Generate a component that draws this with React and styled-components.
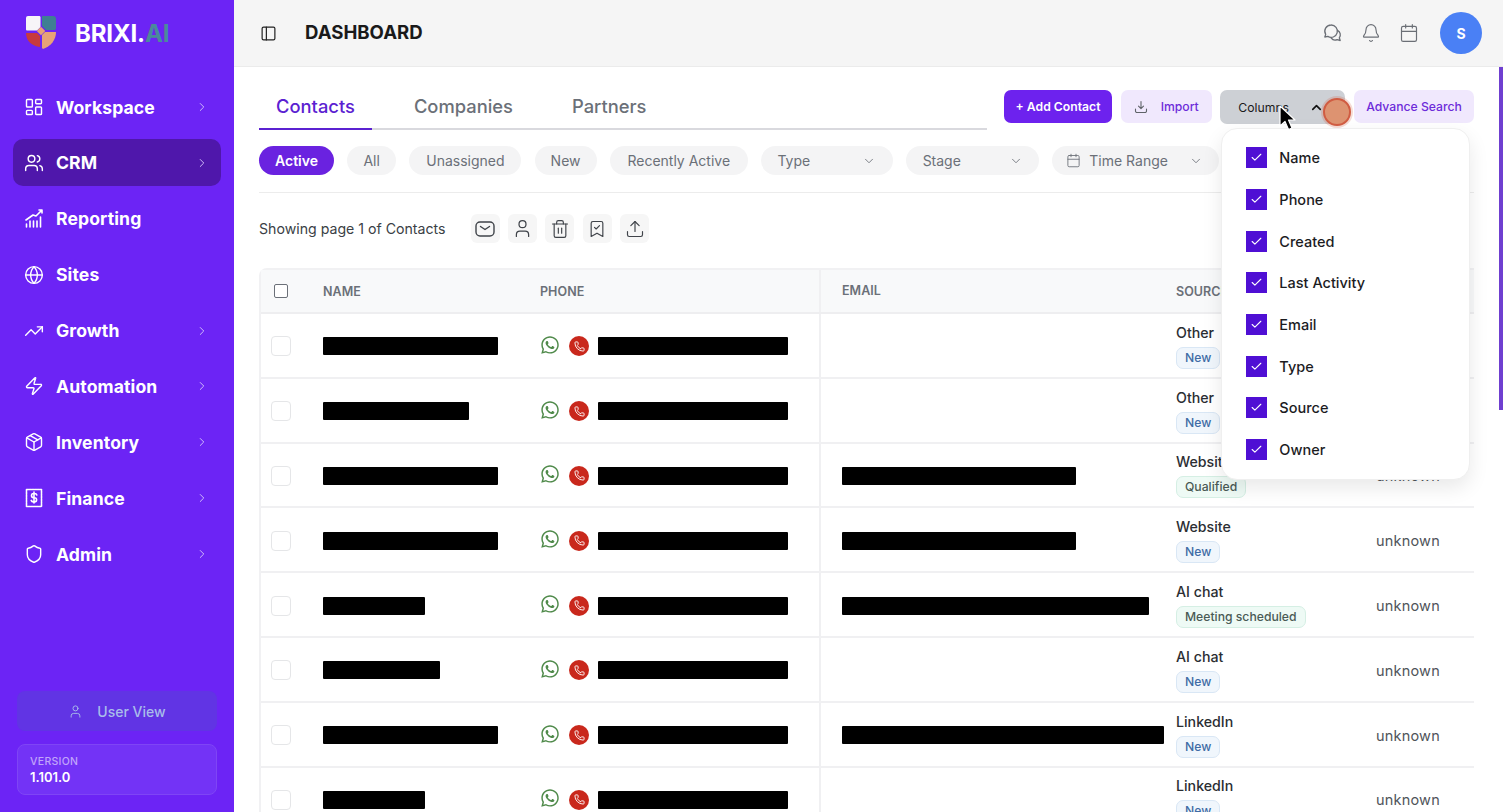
import React from "react";
import styled, { createGlobalStyle } from "styled-components";
import {
  LayoutDashboard, Users, Globe, TrendingUp, Zap, Package, Shield, ChevronRight, ChevronDown, ChevronUp,
  User, Bell, Calendar, PanelLeft, Trash2, BookmarkCheck, Upload, Phone, Check,
} from "lucide-react";
import { FaWhatsapp } from "react-icons/fa";

const Global = createGlobalStyle`
  html, body { margin: 0; padding: 0; height: 100%; overflow: hidden; background: #fff; }
  body { font-family: Inter, "Liberation Sans", sans-serif; color: #1f2430; }
  * { box-sizing: border-box; }
`;

const Shell = styled.div`display: flex; width: 1503px; height: 812px; overflow: hidden; position: relative;`;

const Sidebar = styled.aside`
  width: 234px; flex: none; height: 100%; background: #6c24f5; display: flex; flex-direction: column;
  padding: 0 13px 17px;
`;
const Brand = styled.div`display: flex; align-items: center; gap: 17px; height: 83.6px; flex: none; padding: 0 0 17px 11px;`;
const LogoWrap = styled.span`display: flex; margin-bottom: 2px;`;
const BrandName = styled.span`font-size: 24px; font-weight: 700; color: #fff; letter-spacing: -0.15px;`;
const BrandAccent = styled.span`color: #4a8a9c;`;
const Nav = styled.nav`display: flex; flex-direction: column; gap: 8.88px;`;
const NavItem = styled.div`
  height: 47px; border-radius: 10px; display: flex; align-items: center; padding: 0 12px 0 11px; gap: 12px;
  background: ${(p) => (p.$active ? "#4f17ab" : "transparent")}; color: #fff;
`;
const NavLabel = styled.span`flex: 1; font-size: 17.6px; font-weight: 700; letter-spacing: 0.1px;`;
const NavChevron = styled(ChevronRight)`color: #d5c3fb;`;
const SideBottom = styled.div`margin-top: auto; padding: 0 4px; display: flex; flex-direction: column; gap: 13px;`;
const UserViewBtn = styled.div`
  height: 40px; border-radius: 8px; background: #6134e4; color: #a9bdea; display: flex; align-items: center; justify-content: center;
  gap: 14px; font-size: 14px; font-weight: 500;
`;
const VersionBox = styled.div`
  height: 51px; border-radius: 8px; background: #7333f6; border: 1px solid #7f45f5; padding: 10px 12px; display: flex; flex-direction: column;
`;
const VersionLabel = styled.span`font-size: 10.5px; line-height: 14px; font-weight: 500; color: #c1a4fa; letter-spacing: 0.3px;`;
const VersionValue = styled.span`font-size: 13px; line-height: 16px; font-weight: 600; color: #fff;`;

const Right = styled.div`flex: 1; min-width: 0; display: flex; flex-direction: column; height: 100%;`;
const Header = styled.header`
  height: 67px; flex: none; background: #f5f5f5; border-bottom: 1px solid #ebebeb; display: flex; align-items: center;
  padding: 0 21px 0 26px;
`;
const HeaderTitle = styled.h1`margin: 0 0 2px 28px; font-size: 18.6px; font-weight: 700; color: #1a1a1a; flex: 1;`;
const HeaderIcons = styled.div`display: flex; align-items: center; gap: 18px; color: #6b6f76;`;
const Avatar = styled.div`
  width: 42px; height: 42px; border-radius: 50%; background: #4a80f5; color: #fff; font-size: 14px; font-weight: 700;
  display: flex; align-items: center; justify-content: center; margin-left: 3px;
`;

const Main = styled.main`flex: 1; min-height: 0; overflow: hidden; padding: 23px 29px 0 25px;`;
const TopRow = styled.div`display: flex; justify-content: space-between; align-items: flex-start; height: 40px;`;
const Tabs = styled.div`width: 728px; height: 40px; display: flex; gap: 25px; border-bottom: 2px solid #d9d9de;`;
const Tab = styled.div`
  height: 40px; padding: 0 17px; line-height: 33px; font-size: 18.35px; font-weight: 500;
  color: ${(p) => (p.$active ? "#5b21d1" : "#6b7078")};
  border-bottom: 2px solid ${(p) => (p.$active ? "#5b21d1" : "transparent")};
`;
const Actions = styled.div`display: flex; gap: 8.67px;`;
const ActionButton = styled.div`
  width: ${(p) => p.$w}px; height: 33px; border-radius: 7px; display: flex; align-items: center; justify-content: center; font-size: 12.2px;
  background: ${(p) => (p.$primary ? "#6d22ee" : "#f0e8fd")}; color: ${(p) => (p.$primary ? "#fff" : "#6d2bd9")};
  font-weight: ${(p) => (p.$primary ? 600 : 500)};
  gap: ${(p) => p.$gap || 0}px;
`;
const ColumnsWrap = styled.div`position: relative;`;
const ColumnsButton = styled.div`
  width: 125px; height: 34px; border-radius: 7px; background: #cdd0d5; color: #1a1a1a; display: flex; align-items: center; justify-content: space-between;
  padding: 0 21px 0 18px; font-size: 12.2px; font-weight: 400;
`;
const Dropdown = styled.div`
  position: absolute; top: 38px; left: 1px; width: 249px; height: 352px; background: #fff; border: 1px solid #efefef; border-radius: 16px;
  box-shadow: 0 8px 20px rgba(0,0,0,.09); padding: 8px 0 0 24px; z-index: 5;
`;
const DropItem = styled.div`height: 41.7px; display: flex; align-items: center; gap: 12px; font-size: 14.5px; font-weight: 500; color: #1c1c1f;`;
const DropCheck = styled.span`width: 21px; height: 21px; background: #4f0fd4; color: #fff; display: flex; align-items: center; justify-content: center; flex: none;`;

const Filters = styled.div`
  margin-top: 16px; padding-bottom: 17px; border-bottom: 1px solid #ececec; display: flex; gap: 13.2px; height: 47px;
`;
const Chip = styled.div`
  flex: none; width: ${(p) => p.$w}px; height: 29px; border-radius: 15px; display: flex; align-items: center; justify-content: center; font-size: 14px;
  font-weight: ${(p) => (p.$active ? 600 : 400)};
  background: ${(p) => (p.$active ? "#6a22e0" : "#f4f4f5")}; color: ${(p) => (p.$active ? "#fff" : "#6b7078")};
`;
const SelectChip = styled(Chip)`
  justify-content: space-between; gap: 8px; padding: 0 16.5px 0 ${(p) => p.$pl || 16.5}px;
`;
const SelectLabel = styled.span`flex: 1;`;

const ShowRow = styled.div`margin-top: 21px; height: 29px; display: flex; align-items: center; gap: 8.3px;`;
const ShowText = styled.span`font-size: 14.15px; color: #3b3f46; margin-right: 17px;`;
const IconBtn = styled.div`width: 29px; height: 29px; border-radius: 6px; background: #f6f6f6; color: #3f4349; display: flex; align-items: center; justify-content: center;`;

const Table = styled.div`margin-top: 25px; border: 2px solid #f1f1f3; border-right: none; border-bottom: none; border-radius: 8px 0 0 0; width: 1215px;`;
const cols = "62px 217px 279px 357px 200px 98px";
const HeadRow = styled.div`
  display: grid; grid-template-columns: ${cols}; height: 44px; align-items: center; background: #f8f9fa; border-bottom: 2px solid #eeeef0;
`;
const HeadCell = styled.div`
  font-size: 12.5px; font-weight: 600; color: #6b7078; letter-spacing: 0.05px; height: 100%; display: flex; align-items: center;
  padding-left: ${(p) => p.$pad || 0}px; padding-bottom: ${(p) => (p.$divider ? 2 : 0)}px;
  border-left: ${(p) => (p.$divider ? "2px solid #f0f0f2" : "none")};
`;
const Row = styled.div`display: grid; grid-template-columns: ${cols}; height: 64.8px; align-items: center; border-bottom: 2px solid #f0f0f2;`;
const Cell = styled.div`height: 100%; display: flex; align-items: center; padding-top: 2px; padding-left: ${(p) => p.$pad || 0}px; border-left: ${(p) => (p.$divider ? "2px solid #f0f0f2" : "none")};`;
const HeadCheck = styled.span`width: 14px; height: 14px; border: 1.3px solid #6b7078; border-radius: 2px; margin-left: 13px; display: block; background: #fff;`;
const RowCheck = styled.span`width: 20px; height: 20px; border: 1.5px solid #e5e6e8; border-radius: 4px; margin-left: 10px; display: block; background: #fff;`;
const Redact = styled.span`display: block; background: #000; height: 18px; width: ${(p) => p.$w}px; border-radius: 1px;`;
const PhoneWrap = styled.div`display: flex; align-items: center;`;
const WaIcon = styled(FaWhatsapp)`color: #4f8a4a; width: 20px; height: 20px; margin: 0 9px 3px 0; flex: none;`;
const CallDot = styled.span`width: 20px; height: 20px; border-radius: 50%; background: #c9281c; color: #fff; display: flex; align-items: center; justify-content: center; margin-right: 9px; flex: none;`;
const SourceStack = styled.div`display: flex; flex-direction: column; align-items: flex-start; gap: 6px;`;
const SourceName = styled.span`font-size: 14.2px; line-height: 17px; font-weight: 500; color: #2b2e33;`;
const Badge = styled.span`
  font-size: 12.2px; line-height: 20px; padding: 0 8px; border-radius: 7px; font-weight: 500;
  background: ${(p) => (p.$kind === "green" ? "#eefaf5" : "#f0f6fc")};
  border: 1px solid ${(p) => (p.$kind === "green" ? "#d5efe4" : "#d9e7f5")};
  color: ${(p) => (p.$kind === "green" ? "#4a5a55" : "#3f6ca5")};
`;
const OwnerText = styled.span`font-size: 14.5px; color: #50545a; letter-spacing: 0.2px;`;

const Scrollbar = styled.div`position: absolute; right: 0; top: 67px; width: 4px; height: 343px; background: #6f3fd0; z-index: 4;`;
const ClickDot = styled.div`
  position: absolute; left: 1323px; top: 98px; width: 28px; height: 28px; border-radius: 50%; background: #dd9371;
  border: 2px solid #d05c42; box-shadow: 0 0 0 2px rgba(208,92,66,.22); z-index: 7;
`;
const CursorMark = styled.svg`position: absolute; left: 1278px; top: 105px; z-index: 8;`;

const ReportIcon = () => (
  <svg width="20" height="20" viewBox="0 0 20 20" fill="none" stroke="currentColor" strokeWidth="1.6" strokeLinecap="round" strokeLinejoin="round">
    <path d="M2 11 9 6l3 1 6-6M15 1h3v3" />
    <path d="M2.500 18v-3M6 18v-6M9.500 18v-6M13 18v-6M16.500 18V8" />
  </svg>
);
const FinanceIcon = () => (
  <svg width="20" height="20" viewBox="0 0 20 20" fill="none" stroke="currentColor" strokeWidth="1.6" strokeLinecap="round" strokeLinejoin="round">
    <path d="M2.500 1.500h15v17h-15z" strokeDasharray="2 .7" />
    <path d="M12.800 7a2.200 2.200 0 0 0-2.200-1.500H9.600a2 2 0 0 0 0 4.200h.9a2 2 0 0 1 0 4.200H9.400A2.300 2.300 0 0 1 7.200 12.400M10 4v11" />
  </svg>
);
const ChatIcon = () => (
  <svg width="20" height="20" viewBox="0 0 20 20" fill="none" stroke="currentColor" strokeWidth="1.3" strokeLinecap="round" strokeLinejoin="round">
    <path d="M8 2a6.200 6.200 0 0 0-5.300 9.400L1.800 14l3-.6A6.200 6.200 0 1 0 8 2Z" />
    <path d="M14.500 7.300a5 5 0 0 1 1.800 7.500l.9 2.700-3-.8a5 5 0 0 1-6-1.700" />
  </svg>
);
const ImportIcon = () => (
  <svg width="14" height="14" viewBox="0 0 14 14" fill="none" stroke="#5f6368" strokeWidth="1.100" strokeLinecap="round" strokeLinejoin="round">
    <path d="M7 1.500v7M4.500 6.200 7 8.700l2.500-2.500M1.500 9v2a1.500 1.500 0 0 0 1.500 1.500h8a1.500 1.500 0 0 0 1.500-1.500V9" />
  </svg>
);
const MailIcon = () => (
  <svg width="20" height="20" viewBox="0 0 20 20" fill="none" stroke="currentColor" strokeWidth="1.400" strokeLinecap="round" strokeLinejoin="round">
    <rect x="1" y="3" width="18" height="14" rx="4" />
    <path d="M5.500 7.500 10 10.500l4.500-3" />
  </svg>
);
const LogoMark = () => (
  <svg width="34" height="36" viewBox="0 0 34 36">
    <path d="M4 2h11c1 0 1.500 .5 1.500 1.500V13L13 16.500H3a1 1 0 0 1-1-1V4a2 2 0 0 1 2-2Z" fill="#f7f5f8" />
    <path d="M18 2h11a3 3 0 0 1 3 3v9c0 1-.5 2-1.500 2H22l-4-4V2Z" fill="#3f7f93" />
    <path d="M2 19h11l3 3v11c-8-1-14-6-14-14Z" fill="#c73a3e" />
    <path d="M21 18h11c0 8-5 14-13 17l-1-1V21l3-3Z" fill="#e8a277" />
    <rect x="14" y="14" width="6" height="6" fill="#e8a277" transform="rotate(45 17 17)" />
  </svg>
);

const navItems = [
  { label: "Workspace", icon: <LayoutDashboard size={20} strokeWidth={1.7} />, chev: true },
  { label: "CRM", icon: <Users size={20} strokeWidth={1.7} />, chev: true, active: true },
  { label: "Reporting", icon: <ReportIcon /> },
  { label: "Sites", icon: <Globe size={20} strokeWidth={1.7} /> },
  { label: "Growth", icon: <TrendingUp size={20} strokeWidth={1.7} />, chev: true },
  { label: "Automation", icon: <Zap size={20} strokeWidth={1.7} />, chev: true },
  { label: "Inventory", icon: <Package size={20} strokeWidth={1.7} />, chev: true },
  { label: "Finance", icon: <FinanceIcon />, chev: true },
  { label: "Admin", icon: <Shield size={20} strokeWidth={1.7} />, chev: true },
];
const chips = [
  { label: "All", w: 49 },
  { label: "Unassigned", w: 112 },
  { label: "New", w: 62 },
  { label: "Recently Active", w: 138 },
];
const columnsList = ["Name", "Phone", "Created", "Last Activity", "Email", "Type", "Source", "Owner"];
const rows = [
  { name: 175, email: 0, source: "Other", badge: "New" },
  { name: 146, email: 0, source: "Other", badge: "New" },
  { name: 175, email: 234, source: "Website", badge: "Qualified", green: true },
  { name: 175, email: 234, source: "Website", badge: "New" },
  { name: 102, email: 307, source: "AI chat", badge: "Meeting scheduled", green: true },
  { name: 117, email: 0, source: "AI chat", badge: "New" },
  { name: 175, email: 322, source: "LinkedIn", badge: "New" },
  { name: 102, email: 0, source: "LinkedIn", badge: "New" },
];

export default function App() {
  return (
    <Shell>
      <Global />
      <Sidebar>
        <Brand>
          <LogoWrap><LogoMark /></LogoWrap>
          <BrandName>BRIXI.<BrandAccent>AI</BrandAccent></BrandName>
        </Brand>
        <Nav>
          {navItems.map((n) => (
            <NavItem key={n.label} $active={n.active}>
              {n.icon}
              <NavLabel>{n.label}</NavLabel>
              {n.chev && <NavChevron size={14} strokeWidth={1.6} />}
            </NavItem>
          ))}
        </Nav>
        <SideBottom>
          <UserViewBtn><User size={15} strokeWidth={1.5} />User View</UserViewBtn>
          <VersionBox>
            <VersionLabel>VERSION</VersionLabel>
            <VersionValue>1.101.0</VersionValue>
          </VersionBox>
        </SideBottom>
      </Sidebar>
      <Right>
        <Header>
          <PanelLeft size={17} strokeWidth={1.7} color="#222" />
          <HeaderTitle>DASHBOARD</HeaderTitle>
          <HeaderIcons>
            <ChatIcon />
            <Bell size={20} strokeWidth={1.4} />
            <Calendar size={20} strokeWidth={1.4} />
            <Avatar>S</Avatar>
          </HeaderIcons>
        </Header>
        <Main>
          <TopRow>
            <Tabs>
              <Tab $active>Contacts</Tab>
              <Tab>Companies</Tab>
              <Tab>Partners</Tab>
            </Tabs>
            <Actions>
              <ActionButton $primary $w={108}>+ Add Contact</ActionButton>
              <ActionButton $w={91} $gap={13}><ImportIcon />Import</ActionButton>
              <ColumnsWrap>
                <ColumnsButton>Columns<ChevronUp size={15} strokeWidth={2.6} color="#111" /></ColumnsButton>
                <Dropdown>
                  {columnsList.map((c) => (
                    <DropItem key={c}>
                      <DropCheck><Check size={13} strokeWidth={2} /></DropCheck>
                      {c}
                    </DropItem>
                  ))}
                </Dropdown>
              </ColumnsWrap>
              <ActionButton $w={120}>Advance Search</ActionButton>
            </Actions>
          </TopRow>
          <Filters>
            <Chip $active $w={75}>Active</Chip>
            {chips.map((c) => <Chip key={c.label} $w={c.w}>{c.label}</Chip>)}
            <SelectChip $w={132}><SelectLabel>Type</SelectLabel><ChevronDown size={14} strokeWidth={1.5} /></SelectChip>
            <SelectChip $w={133}><SelectLabel>Stage</SelectLabel><ChevronDown size={14} strokeWidth={1.5} /></SelectChip>
            <SelectChip $w={167} $pl={14}><Calendar size={15} strokeWidth={1.4} /><SelectLabel>Time Range</SelectLabel><ChevronDown size={14} strokeWidth={1.5} /></SelectChip>
          </Filters>
          <ShowRow>
            <ShowText>Showing page 1 of Contacts</ShowText>
            <IconBtn><MailIcon /></IconBtn>
            <IconBtn><User size={21} strokeWidth={1.4} /></IconBtn>
            <IconBtn><Trash2 size={20} strokeWidth={1.4} /></IconBtn>
            <IconBtn><BookmarkCheck size={20} strokeWidth={1.4} /></IconBtn>
            <IconBtn><Upload size={20} strokeWidth={1.4} /></IconBtn>
          </ShowRow>
          <Table>
            <HeadRow>
              <HeadCell><HeadCheck /></HeadCell>
              <HeadCell>NAME</HeadCell>
              <HeadCell>PHONE</HeadCell>
              <HeadCell $divider $pad={21}>EMAIL</HeadCell>
              <HeadCell>SOURCE</HeadCell>
              <HeadCell />
            </HeadRow>
            {rows.map((r, i) => (
              <Row key={i}>
                <Cell><RowCheck /></Cell>
                <Cell><Redact $w={r.name} /></Cell>
                <Cell>
                  <PhoneWrap>
                    <WaIcon />
                    <CallDot><Phone size={11} strokeWidth={2} /></CallDot>
                    <Redact $w={190} />
                  </PhoneWrap>
                </Cell>
                <Cell $divider $pad={21}>{r.email > 0 && <Redact $w={r.email} />}</Cell>
                <Cell>
                  <SourceStack>
                    <SourceName>{r.source}</SourceName>
                    <Badge $kind={r.green ? "green" : "blue"}>{r.badge}</Badge>
                  </SourceStack>
                </Cell>
                <Cell><OwnerText>unknown</OwnerText></Cell>
              </Row>
            ))}
          </Table>
        </Main>
      </Right>
      <Scrollbar />
      <ClickDot />
      <CursorMark width="18" height="28" viewBox="0 0 18 28">
        <path d="M2 1v20l5-4.500 3.500 8 3.500-1.500-3.500-8H17Z" fill="#000" stroke="#fff" strokeWidth="1.200" strokeLinejoin="round" />
      </CursorMark>
    </Shell>
  );
}
